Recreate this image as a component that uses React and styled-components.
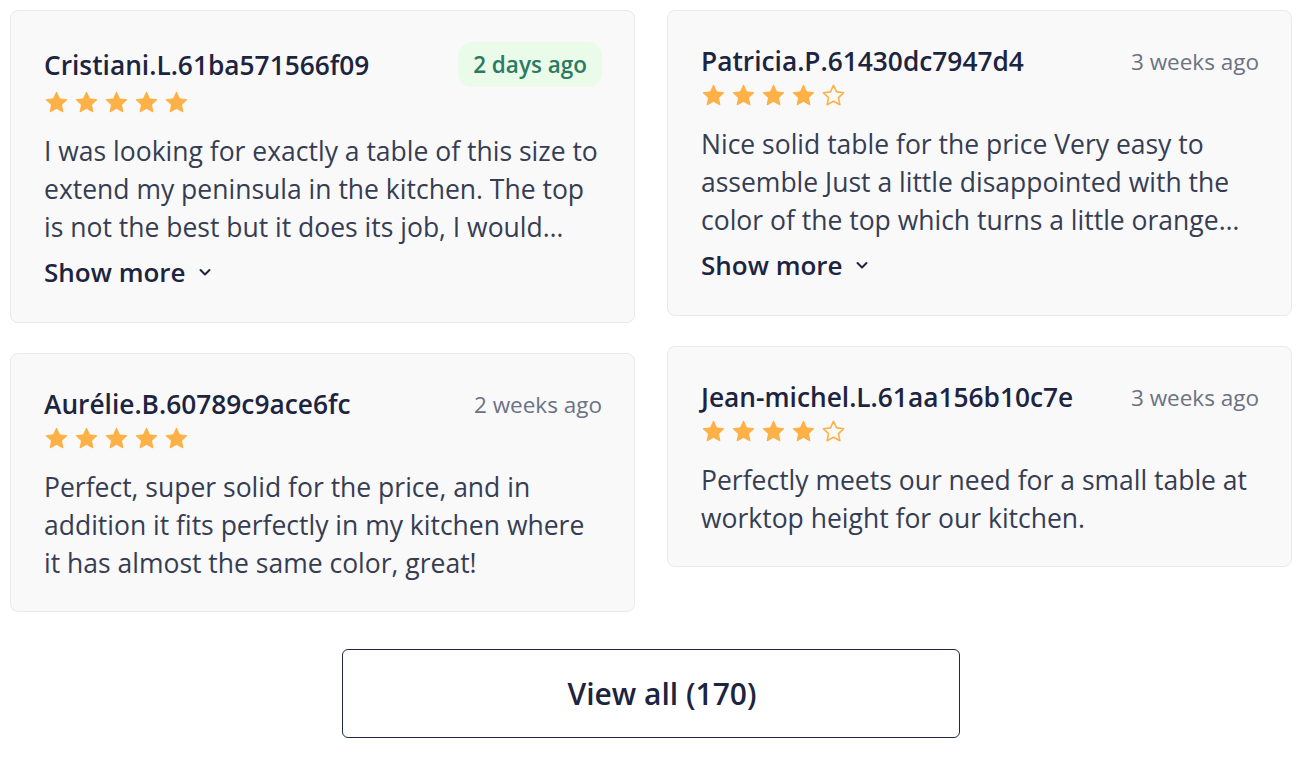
import styled, { createGlobalStyle } from "styled-components";

const GlobalStyle = createGlobalStyle`
  body {
    margin: 0;
    background: #ffffff;
    font-family: "Open Sans", "Noto Sans", sans-serif;
    color: #1d2440;
  }
`;

const columns = [
  [
    {
      name: "Cristiani.L.61ba571566f09",
      date: "2 days ago",
      recent: true,
      rating: 5,
      text: "I was looking for exactly a table of this size to extend my peninsula in the kitchen. The top is not the best but it does its job, I would recommend it to anyone who needs a small extra worktop.",
      clamp: true,
    },
    {
      name: "Aurélie.B.60789c9ace6fc",
      date: "2 weeks ago",
      rating: 5,
      text: "Perfect, super solid for the price, and in addition it fits perfectly in my kitchen where it has almost the same color, great!",
    },
  ],
  [
    {
      name: "Patricia.P.61430dc7947d4",
      date: "3 weeks ago",
      rating: 4,
      text: "Nice solid table for the price Very easy to assemble Just a little disappointed with the color of the top which turns a little orange compared to the photos on the site.",
      clamp: true,
    },
    {
      name: "Jean-michel.L.61aa156b10c7e",
      date: "3 weeks ago",
      rating: 4,
      text: "Perfectly meets our need for a small table at worktop height for our kitchen.",
    },
  ],
];

const Star = ({ filled }) => (
  <svg width="25" height="25" viewBox="0 0 24 24">
    <path
      d="M12 2.2l2.95 6.3 6.9.8-5.1 4.75 1.35 6.85L12 17.5l-6.1 3.4 1.35-6.85-5.1-4.75 6.9-.8z"
      fill={filled ? "#fdb146" : "none"}
      stroke="#fdb146"
      strokeWidth={filled ? 1 : 1.5}
      strokeLinejoin="round"
    />
  </svg>
);

const Chevron = () => (
  <svg width="14" height="10" viewBox="0 0 14 10">
    <path
      d="M2.5 3l4.5 4.5L11.5 3"
      fill="none"
      stroke="#1d2440"
      strokeWidth="2"
      strokeLinecap="round"
      strokeLinejoin="round"
    />
  </svg>
);

const ReviewCard = ({ review }) => (
  <Card>
    <Header>
      <Name>{review.name}</Name>
      <DateTag $recent={review.recent}>{review.date}</DateTag>
    </Header>
    <Stars>
      {[1, 2, 3, 4, 5].map((i) => (
        <Star key={i} filled={i <= review.rating} />
      ))}
    </Stars>
    <Text $clamp={review.clamp}>{review.text}</Text>
    {review.clamp && (
      <ShowMore>
        Show more <Chevron />
      </ShowMore>
    )}
  </Card>
);

const App = () => {
  return (
    <>
      <GlobalStyle />
      <Page>
        <Grid>
          {columns.map((col, i) => (
            <Column key={i}>
              {col.map((r) => (
                <ReviewCard key={r.name} review={r} />
              ))}
            </Column>
          ))}
        </Grid>
        <ViewAll>View all (170)</ViewAll>
      </Page>
    </>
  );
};

const Page = styled.div`
  padding: 10px 17px 30px 10px;
  display: flex;
  flex-direction: column;
  align-items: center;
`;

const Grid = styled.div`
  width: 100%;
  display: grid;
  grid-template-columns: 1fr 1fr;
  gap: 32px;
  align-items: start;
`;

const Column = styled.div`
  display: flex;
  flex-direction: column;
  gap: 30px;
`;

const Card = styled.div`
  background: #f9f9fa;
  border: 1px solid #e9e9ee;
  border-radius: 8px;
  padding: 31px 32px 29px 33px;
`;

const Header = styled.div`
  display: flex;
  justify-content: space-between;
  align-items: center;
  min-height: 38px;
`;

const Name = styled.div`
  font-size: 26.3px;
  font-weight: 600;
  line-height: 38px;
  color: #1d2440;
`;

const DateTag = styled.div`
  font-size: 22.5px;
  line-height: 37px;
  color: ${(p) => (p.$recent ? "#2d7a62" : "#6b7283")};
  background: ${(p) => (p.$recent ? "#eafbea" : "transparent")};
  padding: ${(p) => (p.$recent ? "4px 15px" : "0")};
  border-radius: 14px;
  font-weight: ${(p) => (p.$recent ? 600 : 400)};
`;

const Stars = styled.div`
  display: flex;
  gap: 5px;
  margin-top: 3px;
`;

const Text = styled.p`
  margin: 17px 0 0;
  font-size: 26.5px;
  line-height: 38px;
  color: #363d52;
  ${(p) =>
    p.$clamp &&
    `
    display: -webkit-box;
    -webkit-line-clamp: 3;
    -webkit-box-orient: vertical;
    overflow: hidden;
  `}
`;

const ShowMore = styled.button`
  margin: 7px 0 2px;
  padding: 0;
  border: none;
  background: none;
  font-family: inherit;
  font-size: 26px;
  font-weight: 600;
  line-height: 38px;
  color: #1d2440;
  display: flex;
  align-items: center;
  gap: 12px;
  cursor: pointer;
`;

const ViewAll = styled.button`
  margin-top: 37px;
  width: 618px;
  height: 89px;
  padding: 0 0 0 22px;
  background: #ffffff;
  border: 1.5px solid #1f2942;
  border-radius: 6px;
  font-family: inherit;
  font-size: 30px;
  font-weight: 600;
  color: #1d2440;
  cursor: pointer;
`;

export default App;
